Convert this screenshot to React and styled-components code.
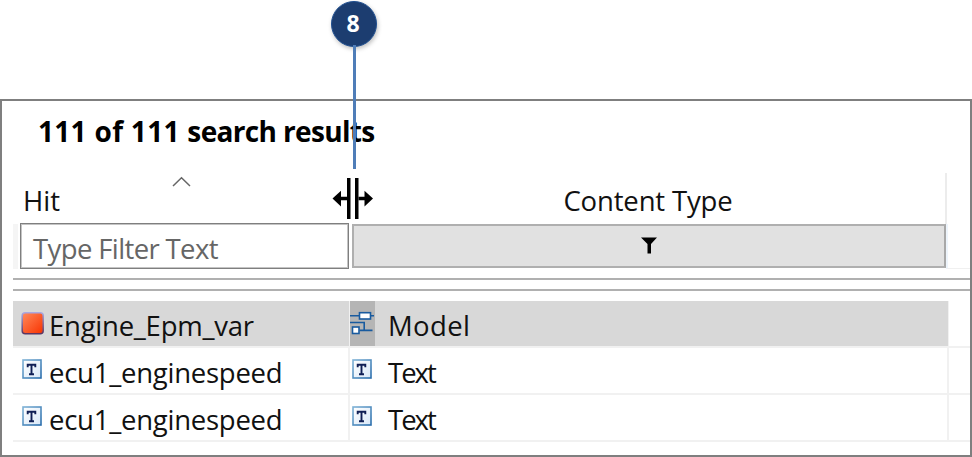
import React from "react";
import styled, { createGlobalStyle, css } from "styled-components";

const Global = createGlobalStyle`
  * { box-sizing: border-box; }
  body { margin: 0; background: #fff; }
`;

const Page = styled.main`
  position: relative;
  width: 972px;
  height: 457px;
  padding-top: 99px;
  overflow: hidden;
  background: #fff;
  color: #111;
  font-family: "Open Sans", "Noto Sans", sans-serif;
  font-size: 27.5px;
`;

const Panel = styled.section`
  height: 358px;
  border: 2px solid #7f7f7f;
  padding-left: 11px;
  display: flex;
  flex-direction: column;
`;

const Label = styled.span`
  display: inline-block;
  flex: none;
  line-height: 38px;
  white-space: pre;
  letter-spacing: ${(p) => p.$track || 0}px;
`;

const Title = styled.h1`
  margin: 0;
  height: 72px;
  padding: 11px 0 0 25px;
  color: #000;
  font-size: 28px;
  font-weight: 700;
  line-height: 38px;
`;

const headColumns = css`
  display: grid;
  grid-template-columns: 336px 598px 1fr;
`;

const HeadRow = styled.div`
  ${headColumns}
  height: 51px;
`;

const HitHead = styled.div`
  position: relative;
  padding: 9px 0 0 10px;
`;

const SortArrow = styled.svg`
  position: absolute;
  left: 159px;
  top: 3px;
`;

const TypeHead = styled.div`
  display: flex;
  justify-content: center;
  padding: 9px 0 0 2px;
  border-right: 2px solid #ececec;
`;

const FilterRow = styled.div`
  ${headColumns}
  height: 45px;
`;

const FilterCell = styled.div`
  border-left: 5px solid #f5f5f5;
  padding-left: 2px;
`;

const FilterInput = styled.div`
  height: 46px;
  margin-top: -1px;
  border: 1px solid #7f7f7f;
  outline: 1px solid #c4c4c4;
  outline-offset: -2px;
  padding: 6px 0 0 12px;
  color: #666;
`;

const FilterButton = styled.div`
  height: 44px;
  margin: 0 1px 0 3px;
  border: 2px solid #afafaf;
  border-right-color: #a8a8a8;
  background: #e1e1e1;
  display: flex;
  justify-content: center;
  padding-top: 11px;
`;

const FilterRest = styled.div`
  margin-left: -1px;
  border-left: 2px solid #edf4fb;
  border-bottom: 1px solid #f0f0f0;
`;

const Divider = styled.div`
  height: 13px;
  margin: 9px 0 10px;
  border-top: 2px solid #b0b0b0;
  border-bottom: 2px solid #b0b0b0;
`;

const Row = styled.div`
  display: grid;
  grid-template-columns: 337px 599px 1fr;
  height: 47px;
  border-bottom: 2px solid #f1f1f1;
`;

const Cell = styled.div`
  display: flex;
  border-right: ${(p) => (p.$selected ? 1 : 2)}px solid #f1f1f1;
  padding-left: ${(p) => p.$inset || 0}px;
  background: ${(p) => (p.$selected ? "#d8d8d8" : "transparent")};

  ${Label} {
    padding-top: 6px;
  }
`;

const IconBox = styled.span`
  flex: none;
  width: ${(p) => p.$width}px;
  margin-right: ${(p) => p.$gap}px;
  padding: ${(p) => p.$top}px 0 0 ${(p) => p.$left || 0}px;
  background: ${(p) => (p.$shaded ? "#b5b5b5" : "transparent")};
  line-height: 0;
`;

const Callout = styled.div`
  position: absolute;
  left: 331px;
  top: 1px;
  width: 46px;
  display: flex;
  flex-direction: column;
  align-items: center;
`;

const Badge = styled.div`
  width: 46px;
  height: 46px;
  border-radius: 50%;
  border: 1px solid #1f4f91;
  background: #1c3d70;
  box-shadow: 1px 2px 4px rgba(0, 0, 0, 0.25);
  color: #fff;
  font-size: 23px;
  font-weight: 700;
  line-height: 43px;
  padding-right: 2px;
  text-align: center;
`;

const Stem = styled.div`
  width: 3px;
  height: 124px;
  margin: -2px 0 0 1px;
  background: #4f7db8;
`;

const ResizeCursor = styled.svg`
  position: absolute;
  left: 332px;
  top: 178px;
`;

const TextIcon = () => (
  <svg width="20" height="20" viewBox="0 0 20 20">
    <defs>
      <linearGradient id="tb" x1="0" y1="0" x2="1" y2="1">
        <stop offset="0" stopColor="#7fb2d6" />
        <stop offset="1" stopColor="#2a6dab" />
      </linearGradient>
      <linearGradient id="tf" x1="0" y1="0" x2="1" y2="1">
        <stop offset="0" stopColor="#fff" />
        <stop offset="1" stopColor="#d9e8f8" />
      </linearGradient>
    </defs>
    <rect x="1" y="1" width="18" height="18" fill="url(#tf)" stroke="url(#tb)" strokeWidth="1.6" />
    <path d="M5.700 8.200V5.800h7.600v2.400M9.500 5.800v9.200M7 15.200h5" fill="none" stroke="#101f55" strokeWidth="1.900" />
  </svg>
);

const VariableIcon = () => (
  <svg width="24" height="24" viewBox="0 0 24 24">
    <defs>
      <linearGradient id="vf" x1="0" y1="0" x2="1" y2="1">
        <stop offset="0" stopColor="#ff8a5c" />
        <stop offset="1" stopColor="#f83200" />
      </linearGradient>
      <linearGradient id="vb" x1="0" y1="0" x2="0" y2="1">
        <stop offset="0" stopColor="#aaa8e0" />
        <stop offset="1" stopColor="#5b3561" />
      </linearGradient>
    </defs>
    <rect x="1.2" y="1.7" width="21" height="21" rx="3" fill="url(#vf)" stroke="url(#vb)" strokeWidth="1.5" />
  </svg>
);

const ModelIcon = () => (
  <svg width="24" height="24" viewBox="0 0 24 24" fill="none" stroke="#195b9f" strokeWidth="1.6">
    <path d="M0 4.800h9M21 4.800h3M0 11.500h14.200V19.400M9.500 19.400h13" />
    <rect x="9.500" y="1.700" width="11" height="6.300" fill="#fff" />
    <rect x="2.500" y="16" width="6.500" height="6.500" fill="#fff" />
  </svg>
);

const rows = [
  { hit: "Engine_Epm_var", type: "Model", selected: true, hitTrack: -0.25, typeTrack: 0.35 },
  { hit: "ecu1_enginespeed", type: "Text", hitTrack: -0.25, typeTrack: -2 },
  { hit: "ecu1_enginespeed", type: "Text", hitTrack: -0.25, typeTrack: -2 },
];

const ResultRow = ({ row }) => (
  <Row>
    <Cell $selected={row.selected} $inset={8}>
      <IconBox $width={24} $gap={4} $top={row.selected ? 10 : 11} $left={row.selected ? 0 : 1}>
        {row.selected ? <VariableIcon /> : <TextIcon />}
      </IconBox>
      <Label $track={row.hitTrack}>{row.hit}</Label>
    </Cell>
    <Cell $selected={row.selected}>
      <IconBox $width={25} $gap={13} $top={row.selected ? 10 : 11} $left={row.selected ? 0 : 2} $shaded={row.selected}>
        {row.selected ? <ModelIcon /> : <TextIcon />}
      </IconBox>
      <Label $track={row.typeTrack}>{row.type}</Label>
    </Cell>
  </Row>
);

export default function App() {
  return (
    <Page>
      <Global />
      <Panel>
        <Title>
          <Label $track={0.3}>111 of 111 </Label>
          <Label $track={-0.65}>search results</Label>
        </Title>
        <HeadRow>
          <HitHead>
            <SortArrow width="20" height="12" viewBox="0 0 20 12" fill="none" stroke="#666" strokeWidth="1.5">
              <path d="M1 10L9.500 1.800L18 10" />
            </SortArrow>
            <Label>Hit</Label>
          </HitHead>
          <TypeHead><Label $track={-0.15}>Content Type</Label></TypeHead>
        </HeadRow>
        <FilterRow>
          <FilterCell><FilterInput><Label $track={-0.62}>Type Filter Text</Label></FilterInput></FilterCell>
          <FilterButton>
            <svg width="16" height="17" viewBox="0 0 16 17"><path d="M0 .5h16L10 7v9.500H6.500V7z" fill="#000" /></svg>
          </FilterButton>
          <FilterRest />
        </FilterRow>
        <Divider />
        {rows.map((row, i) => <ResultRow key={i} row={row} />)}
      </Panel>
      <Callout>
        <Badge>8</Badge>
        <Stem />
      </Callout>
      <ResizeCursor width="42" height="41" viewBox="0 0 42 41">
        <path d="M15 0h3.500v41H15zM23 0h3.500v41H23z" />
        <path d="M.5 20.500L9 12.800v6h6v3.500H9V28.500zM41 20.500L32.500 12.800v6h-6v3.500h6V28.500z" />
      </ResizeCursor>
    </Page>
  );
}
